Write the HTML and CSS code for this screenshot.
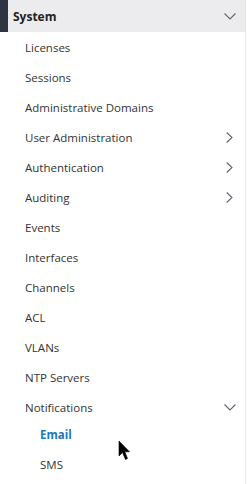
FILE: index.html
```html
<!DOCTYPE html>
<html>
<head>
    <title>System</title>
	<link rel="stylesheet" href="styles.css">
</head>
<body>
	<div class="sidebar">
		<div class="group-head">
			<span class="group-title">System</span>
			<svg class="chev" width="12" height="7" viewBox="0 0 12 7"><path d="M0.5 0.5 L6 6 L11.5 0.5" fill="none" stroke="#5f6570" stroke-width="1.1"/></svg>
		</div>
		<ul class="menu">
			<li class="item">Licenses</li>
			<li class="item">Sessions</li>
			<li class="item">Administrative Domains</li>
			<li class="item">User Administration <svg class="arrow" width="7" height="11" viewBox="0 0 7 11"><path d="M0.7 0.5 L6 5.5 L0.7 10.5" fill="none" stroke="#5f6570" stroke-width="1.1"/></svg></li>
			<li class="item">Authentication <svg class="arrow" width="7" height="11" viewBox="0 0 7 11"><path d="M0.7 0.5 L6 5.5 L0.7 10.5" fill="none" stroke="#5f6570" stroke-width="1.1"/></svg></li>
			<li class="item">Auditing <svg class="arrow" width="7" height="11" viewBox="0 0 7 11"><path d="M0.7 0.5 L6 5.5 L0.7 10.5" fill="none" stroke="#5f6570" stroke-width="1.1"/></svg></li>
			<li class="item">Events</li>
			<li class="item">Interfaces</li>
			<li class="item">Channels</li>
			<li class="item">ACL</li>
			<li class="item">VLANs</li>
			<li class="item">NTP Servers</li>
			<li class="item">Notifications <svg class="chev" width="12" height="7" viewBox="0 0 12 7"><path d="M0.5 0.5 L6 6 L11.5 0.5" fill="none" stroke="#5f6570" stroke-width="1.1"/></svg></li>
		</ul>
		<ul class="submenu">
			<li class="sub active">Email</li>
			<li class="sub">SMS</li>
		</ul>
		<svg class="cursor" width="14" height="22" viewBox="0 0 14 22"><path d="M1 1 L1 16 L4.5 12.5 L7.5 19.5 L9.5 18.5 L6.8 11.8 L11.5 11.8 Z" fill="#000" stroke="#000" stroke-width="0.6"/></svg>
	</div>
</body>
</html>
```

FILE: styles.css
```css
body {
	margin: 0;
	background: #fff;
	font-family: "Open Sans", "Noto Sans", sans-serif;
	font-size: 11.5px;
	color: #333;
}

.sidebar {
	position: relative;
	width: 245px;
	height: 484px;
	border-right: 1px solid #e6e6e9;
}

.group-head {
	display: flex;
	align-items: center;
	justify-content: space-between;
	height: 32px;
	background: #ececef;
	border-left: 8px solid #2e3441;
	padding: 0 9px 0 5px;
}

.group-title {
	font-weight: bold;
	font-size: 12px;
	color: #222;
}

.menu, .submenu {
	list-style: none;
	margin: 0;
	padding: 0;
}

.item {
	display: flex;
	align-items: center;
	justify-content: space-between;
	height: 30px;
	padding: 0 12px 0 25px;
}

.item .chev {
	margin-right: -3px;
}

.submenu {
	margin-top: -3px;
}

.sub {
	display: flex;
	align-items: center;
	height: 30px;
	padding-left: 40px;
}

.sub.active {
	color: #1a78c2;
	font-weight: bold;
}

.cursor {
	position: absolute;
	left: 118px;
	top: 440px;
}
```
